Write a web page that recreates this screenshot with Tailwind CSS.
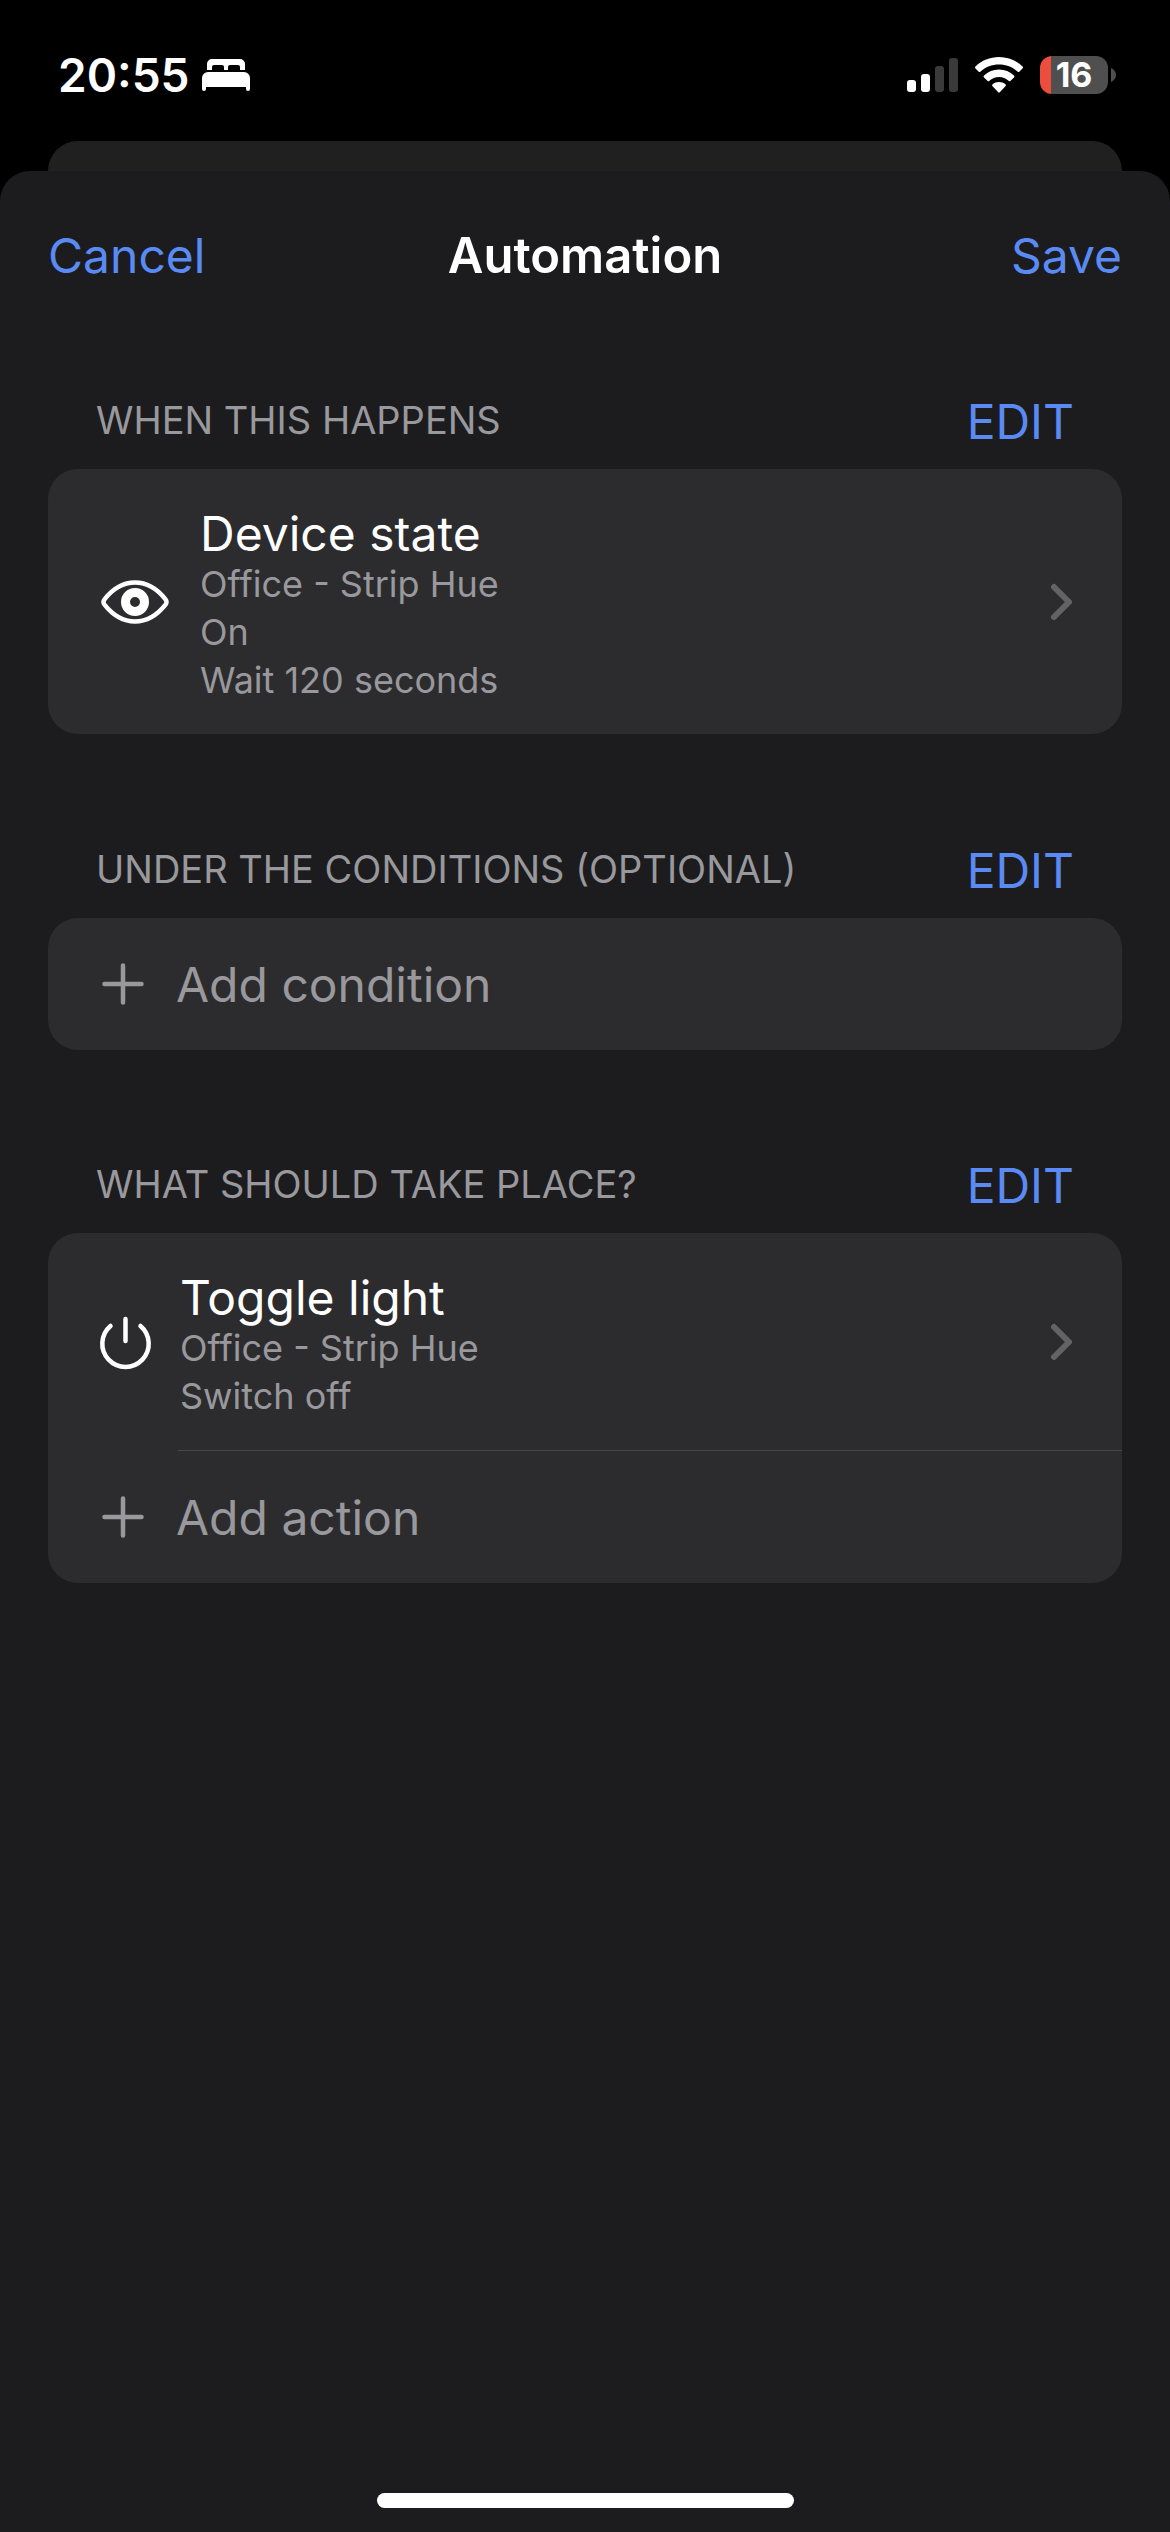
<!DOCTYPE html>
<html lang="en">
<head>
  <meta charset="UTF-8">
  <meta name="viewport" content="width=device-width, initial-scale=1.0">
  <title>Automation</title>
  <script src="https://cdn.jsdelivr.net/npm/@tailwindcss/browser@4"></script>
</head>
<body class="bg-black min-h-screen flex flex-col font-['Inter','Liberation_Sans',sans-serif] text-white">

  <!-- Status bar -->
  <div class="flex items-center justify-between h-[141px] pt-2 pl-[58px] pr-[54px]">
    <div class="flex items-center gap-3">
      <span class="text-[46px] leading-[60px] font-semibold">20:55</span>
      <svg class="w-[48px] h-[34px]" viewBox="0 0 48 34" fill="#fff" aria-hidden="true">
        <path d="M5 12V6a5 5 0 0 1 5-5h28a5 5 0 0 1 5 5v6h-5V9a2 2 0 0 0-2-2h-8a2 2 0 0 0-2 2v3h-4V9a2 2 0 0 0-2-2h-8a2 2 0 0 0-2 2v3z"/>
        <path d="M0 20a6 6 0 0 1 6-6h36a6 6 0 0 1 6 6v11a2 2 0 0 1-4 0v-2H4v2a2 2 0 0 1-4 0z"/>
      </svg>
    </div>
    <div class="flex items-center">
      <svg class="w-[52px] h-[36px]" viewBox="0 0 52 36" aria-hidden="true">
        <rect x="0" y="23" width="9" height="12" rx="3" fill="#fff"/>
        <rect x="14" y="17" width="9" height="18" rx="3" fill="#fff"/>
        <rect x="28" y="9" width="9" height="26" rx="3" fill="#3a3a3a"/>
        <rect x="42" y="1" width="9" height="34" rx="3" fill="#3a3a3a"/>
      </svg>
      <svg class="w-[48px] h-[36px] ml-4" viewBox="0 0 48 36" fill="#fff" aria-hidden="true">
        <path d="M24 0C33 0 41.500 3.500 47.500 9.500q1 1 0 2l-3 3q-1 1-2 0C37.500 10 31 7.500 24 7.500S10.500 10 5.500 14.500q-1 1-2 0l-3-3q-1-1 0-2C6.500 3.500 15 0 24 0z"/>
        <path d="M24 12.500c5.800 0 11 2.200 15 5.900q1 1 0 2l-3.400 3.400q-1 1-2 0C31 21.400 27.700 20 24 20s-7 1.400-9.600 3.800q-1 1-2 0L9 20.400q-1-1 0-2c4-3.700 9.200-5.900 15-5.900z"/>
        <path d="M24 25c2.500 0 4.700.9 6.400 2.300q1 1 0 2l-5.400 5.800q-1 1-2 0l-5.400-5.800q-1-1 0-2C19.300 25.900 21.500 25 24 25z"/>
      </svg>
      <div class="flex items-center ml-[17px] gap-[3px]">
        <div class="flex items-center justify-center w-[68px] h-[38px] rounded-xl bg-linear-to-r from-[#eb4e3d] from-[16%] to-[#4f4f4f] to-[16%]">
          <span class="text-[34px] leading-[38px] font-bold">16</span>
        </div>
        <svg class="w-[5px] h-[14px]" viewBox="0 0 5 14" fill="#4f4f4f" aria-hidden="true"><path d="M0 0c3 1.500 5 4 5 7s-2 5.500-5 7z"/></svg>
      </div>
    </div>
  </div>

  <!-- Edge of the sheet behind -->
  <div class="h-[60px] mx-12 -mb-[30px] rounded-t-[30px] bg-[#202021]"></div>

  <!-- Sheet -->
  <main class="relative grow flex flex-col rounded-t-[30px] bg-[#1c1c1e] px-12 pt-[55px]">
    <header class="grid grid-cols-3 items-center leading-[60px]">
      <button type="button" class="justify-self-start text-[48px] text-[#5a8bf4]">Cancel</button>
      <h1 class="justify-self-center text-[49px] font-semibold">Automation</h1>
      <button type="button" class="justify-self-end text-[48px] text-[#5a8bf4]">Save</button>
    </header>

    <section class="mt-[106px]">
      <div class="flex items-start justify-between px-12 mb-[17px]">
        <h2 class="text-[38px] leading-[56px] text-[#98989d]">WHEN THIS HAPPENS</h2>
        <button type="button" class="text-[48px] leading-[60px] text-[#5a8bf4]">EDIT</button>
      </div>
      <div class="rounded-[30px] bg-[#2c2c2e]">
        <button type="button" class="flex items-center w-full px-[50px] text-left">
          <svg class="w-[72px] h-[46px]" viewBox="0 0 72 46" fill="none" aria-hidden="true">
            <path d="M6.500 20.300C15 9.500 25 3.500 37 3.500S59 9.500 67.500 20.300q2 2.700 0 5.400C59 36.500 49 42.500 37 42.500S15 36.500 6.500 25.700q-2-2.700 0-5.400z" stroke="#fff" stroke-width="4.500"/>
            <circle cx="37" cy="23" r="9.500" stroke="#fff" stroke-width="9"/>
          </svg>
          <span class="grow pl-[30px] pt-[39px] pb-[30px]">
            <span class="block text-[48px] leading-[52px]">Device state</span>
            <span class="block text-[36px] leading-[48px] text-[#98989d]">Office - Strip Hue</span>
            <span class="block text-[36px] leading-[48px] text-[#98989d]">On</span>
            <span class="block text-[36px] leading-[48px] text-[#98989d]">Wait 120 seconds</span>
          </span>
          <svg class="w-[24px] h-[40px]" viewBox="0 0 24 40" fill="none" stroke="#636366" stroke-width="6" stroke-linecap="round" stroke-linejoin="round" aria-hidden="true"><path d="M6 5l15 15L6 35"/></svg>
        </button>
      </div>
    </section>

    <section class="mt-[107px]">
      <div class="flex items-start justify-between px-12 mb-[17px]">
        <h2 class="text-[38px] leading-[56px] text-[#98989d]">UNDER THE CONDITIONS (OPTIONAL)</h2>
        <button type="button" class="text-[48px] leading-[60px] text-[#5a8bf4]">EDIT</button>
      </div>
      <div class="rounded-[30px] bg-[#2c2c2e]">
        <button type="button" class="flex items-center w-full h-[132px] px-[54px] gap-8 text-left text-[#98989d]">
          <svg class="w-[42px] h-[42px]" viewBox="0 0 42 42" fill="none" stroke="currentColor" stroke-width="4.500" stroke-linecap="round" aria-hidden="true"><path d="M21 2.500v37M2.500 21h37"/></svg>
          <span class="pt-0.5 text-[48px] leading-[60px]">Add condition</span>
        </button>
      </div>
    </section>

    <section class="mt-[106px]">
      <div class="flex items-start justify-between px-12 mb-[17px]">
        <h2 class="text-[38px] leading-[56px] text-[#98989d]">WHAT SHOULD TAKE PLACE?</h2>
        <button type="button" class="text-[48px] leading-[60px] text-[#5a8bf4]">EDIT</button>
      </div>
      <div class="rounded-[30px] bg-[#2c2c2e]">
        <button type="button" class="flex items-center w-full px-[50px] text-left">
          <svg class="w-[56px] h-[56px]" viewBox="0 0 56 56" fill="none" stroke="#fff" stroke-width="4.500" stroke-linecap="round" aria-hidden="true">
            <path d="M27.500 5v22"/>
            <path d="M12.500 12a23.200 23.200 0 1 0 30 0"/>
          </svg>
          <span class="grow pl-[26px] pt-[39px] pb-[30px]">
            <span class="block text-[48px] leading-[52px]">Toggle light</span>
            <span class="block text-[36px] leading-[48px] text-[#98989d]">Office - Strip Hue</span>
            <span class="block text-[36px] leading-[48px] text-[#98989d]">Switch off</span>
          </span>
          <svg class="w-[24px] h-[40px]" viewBox="0 0 24 40" fill="none" stroke="#636366" stroke-width="6" stroke-linecap="round" stroke-linejoin="round" aria-hidden="true"><path d="M6 5l15 15L6 35"/></svg>
        </button>
        <div class="h-px ml-[130px] bg-[#464649]"></div>
        <button type="button" class="flex items-center w-full h-[132px] px-[54px] gap-8 text-left text-[#98989d]">
          <svg class="w-[42px] h-[42px]" viewBox="0 0 42 42" fill="none" stroke="currentColor" stroke-width="4.500" stroke-linecap="round" aria-hidden="true"><path d="M21 2.500v37M2.500 21h37"/></svg>
          <span class="pt-0.5 text-[48px] leading-[60px]">Add action</span>
        </button>
      </div>
    </section>

    <!-- Home indicator -->
    <div class="mt-auto mb-6 mx-auto w-[417px] h-[15px] rounded-full bg-white"></div>
  </main>
</body>
</html>
